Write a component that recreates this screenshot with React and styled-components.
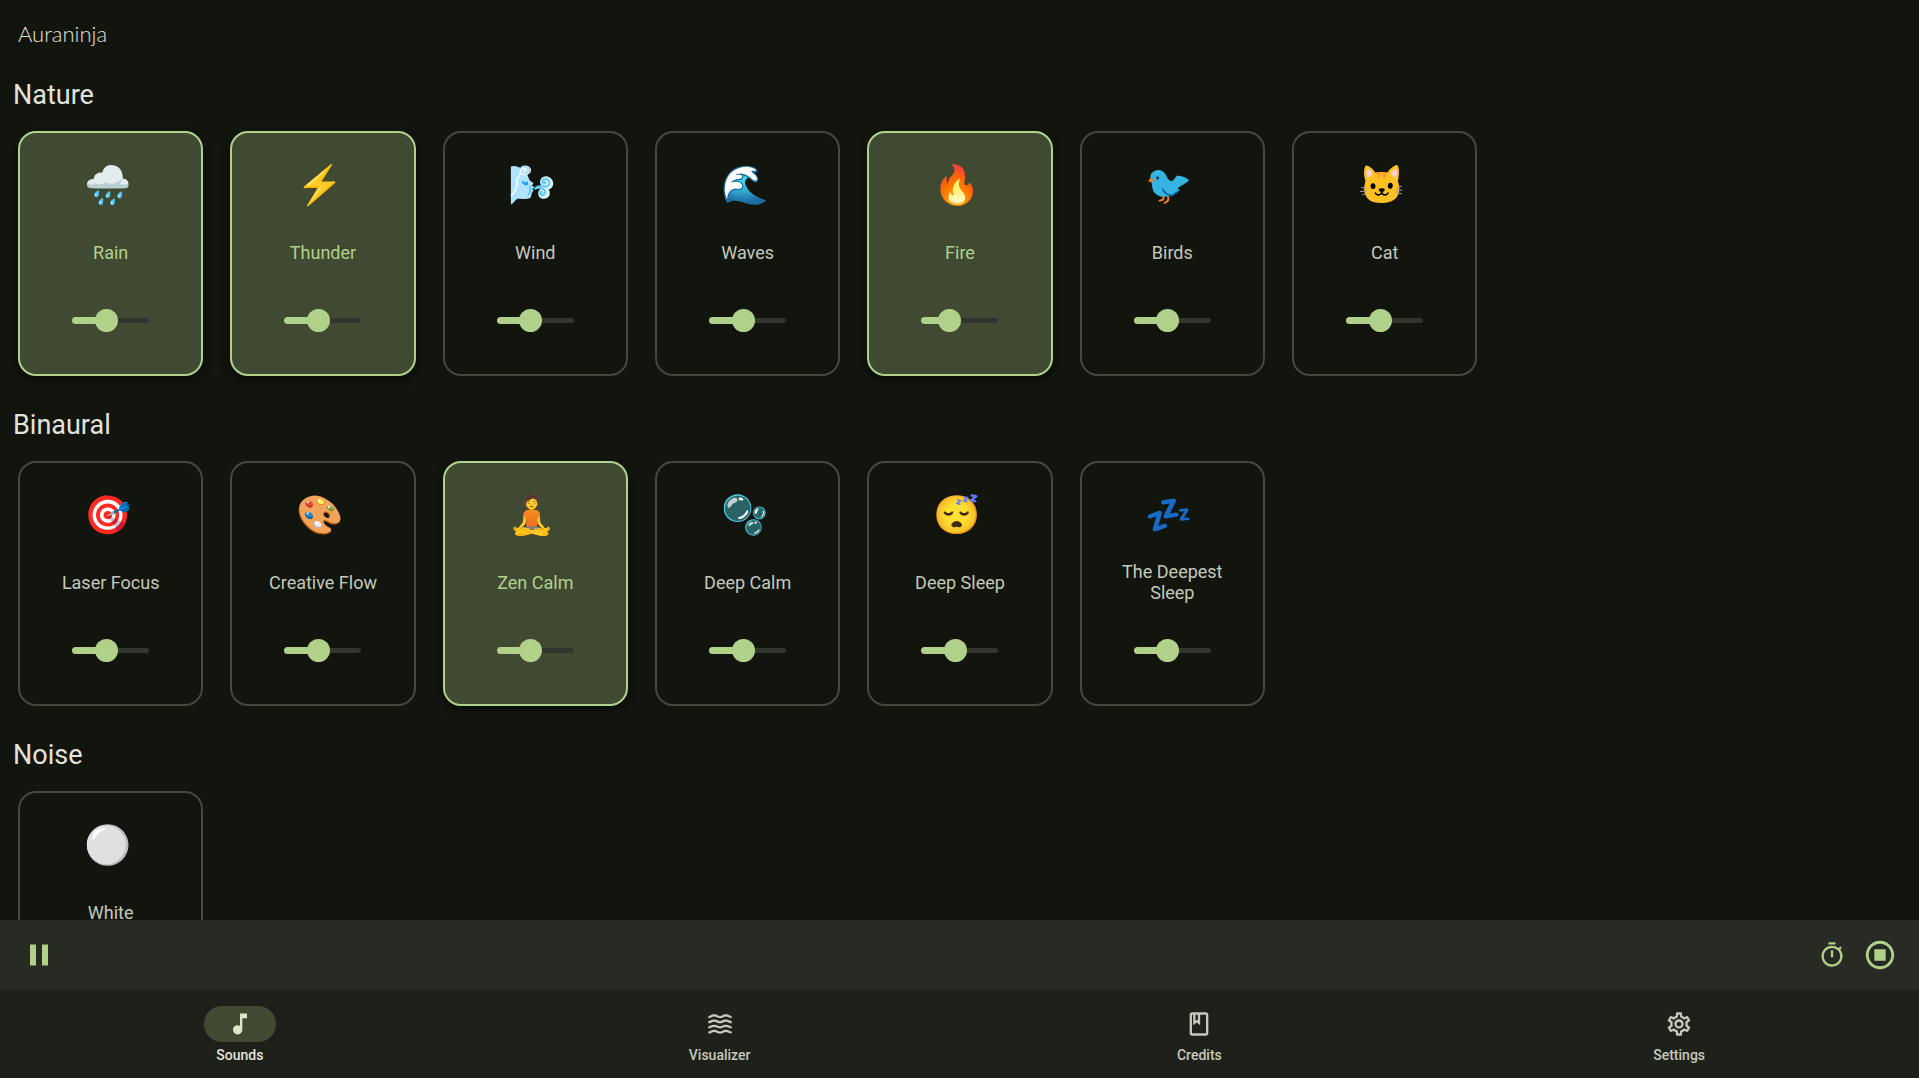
import React, { useState } from 'react';
import styled, { createGlobalStyle } from 'styled-components';
import {
  MdMusicNote,
  MdWaves,
  MdOutlineBook,
  MdOutlineSettings,
  MdOutlineTimer,
  MdOutlineStopCircle,
  MdPause,
} from 'react-icons/md';

const GlobalStyle = createGlobalStyle`
  * {
    box-sizing: border-box;
  }
  body {
    margin: 0;
    background: #12150e;
    color: #e3e3db;
    font-family: Roboto, sans-serif;
  }
  button {
    font-family: inherit;
    border: 0;
    padding: 0;
    background: none;
    cursor: pointer;
  }
`;
const Screen = styled.div`
  height: 100vh;
  display: flex;
  flex-direction: column;
`;
const Header = styled.header`
  flex: none;
  height: 77px;
  padding: 16px 18px;
`;
const Brand = styled.div`
  font-family: Lato, sans-serif;
  font-size: 22px;
  font-weight: 300;
  line-height: 36px;
`;
const Sounds = styled.main`
  flex: 1;
  min-height: 0;
  overflow-y: auto;
  scrollbar-width: none;
`;
const Section = styled.section`
  padding: 0 17px 31px 18px;
`;
const SectionTitle = styled.h2`
  margin: 0 0 18px -5px;
  font-size: 27px;
  font-weight: 400;
  line-height: 36px;
`;
const CardGrid = styled.div`
  display: grid;
  grid-template-columns: repeat(auto-fill, minmax(180px, 1fr));
  gap: 27px;
`;
const Card = styled.article`
  height: 245px;
  padding: 27px 36px;
  display: flex;
  flex-direction: column;
  align-items: center;
  border: 2px solid ${(props) => (props.$active ? '#b1d18a' : '#44483d')};
  border-radius: 18px;
  background: ${(props) => (props.$active ? '#404a33' : 'transparent')};
  color: ${(props) => (props.$active ? '#b1d18a' : '#c5c8ba')};
  box-shadow: ${(props) =>
    props.$active ? '0 4px 8px rgba(0, 0, 0, 0.5)' : 'none'};
`;
const SoundButton = styled.button`
  color: inherit;
  display: flex;
  flex-direction: column;
  align-items: center;
`;
const Emoji = styled.span`
  padding-right: 7px;
  font-size: 38px;
  line-height: 50px;
`;
const Label = styled.span`
  height: 84px;
  display: flex;
  align-items: center;
  font-size: 18px;
  line-height: 21px;
  text-align: center;
`;
const SliderBox = styled.label`
  width: 77px;
  height: 60px;
  display: grid;
  align-items: center;
  > * {
    grid-area: 1 / 1;
  }
`;
const Rail = styled.span`
  height: 5px;
  border-radius: 3px;
  background: #33362e;
`;
const Fill = styled.span`
  height: 7px;
  border-radius: 4px;
  background: #b1d18a;
`;
const Range = styled.input`
  appearance: none;
  width: 100%;
  height: 23px;
  margin: 0;
  background: none;
  cursor: pointer;
  &::-webkit-slider-thumb {
    appearance: none;
    width: 23px;
    height: 23px;
    border-radius: 50%;
    background: #b1d18a;
  }
`;
const PlayerBar = styled.div`
  flex: none;
  height: 70px;
  padding: 0 20px;
  display: flex;
  align-items: center;
  justify-content: space-between;
  background: #282b24;
  color: #b1d18a;
`;
const PlayerActions = styled.div`
  display: flex;
  gap: 10px;
`;
const IconButton = styled.button`
  width: 38px;
  height: 38px;
  display: grid;
  place-items: center;
  color: inherit;
`;
const NavBar = styled.nav`
  flex: none;
  height: 88px;
  display: flex;
  background: #1e211a;
`;
const NavLink = styled.a`
  flex: 1;
  padding-top: 16px;
  display: flex;
  flex-direction: column;
  align-items: center;
  gap: 5px;
  color: ${(props) => (props.$active ? '#e3e3db' : '#c5c8ba')};
  font-size: 14px;
  font-weight: 500;
  line-height: 16px;
  text-decoration: none;
`;
const NavPill = styled.span`
  width: 72px;
  height: 36px;
  display: grid;
  place-items: center;
  border-radius: 18px;
  background: ${(props) => (props.$active ? '#404a33' : 'transparent')};
  color: ${(props) => (props.$active ? '#dce7c8' : 'inherit')};
`;

const sections = [
  {
    title: 'Nature',
    sounds: [
      { name: 'Rain', emoji: '🌧️', volume: 42, active: true },
      { name: 'Thunder', emoji: '⚡', volume: 42, active: true },
      { name: 'Wind', emoji: '🌬️', volume: 42 },
      { name: 'Waves', emoji: '🌊', volume: 42 },
      { name: 'Fire', emoji: '🔥', volume: 30, active: true },
      { name: 'Birds', emoji: '🐦', volume: 42 },
      { name: 'Cat', emoji: '🐱', volume: 42 },
    ],
  },
  {
    title: 'Binaural',
    sounds: [
      { name: 'Laser Focus', emoji: '🎯', volume: 42 },
      { name: 'Creative Flow', emoji: '🎨', volume: 42 },
      { name: 'Zen Calm', emoji: '🧘', volume: 42, active: true },
      { name: 'Deep Calm', emoji: '🫧', volume: 42 },
      { name: 'Deep Sleep', emoji: '😴', volume: 42 },
      { name: 'The Deepest Sleep', emoji: '💤', volume: 42 },
    ],
  },
  {
    title: 'Noise',
    sounds: [{ name: 'White', emoji: '⚪', volume: 42 }],
  },
];

const tabs = [
  { name: 'Sounds', icon: MdMusicNote, active: true },
  { name: 'Visualizer', icon: MdWaves },
  { name: 'Credits', icon: MdOutlineBook },
  { name: 'Settings', icon: MdOutlineSettings },
];

function SoundCard({ sound }) {
  const [active, setActive] = useState(!!sound.active);
  const [volume, setVolume] = useState(sound.volume);
  return (
    <Card $active={active}>
      <SoundButton aria-pressed={active} onClick={() => setActive(!active)}>
        <Emoji>{sound.emoji}</Emoji>
        <Label>{sound.name}</Label>
      </SoundButton>
      <SliderBox>
        <Rail />
        <Fill style={{ width: `${volume}%` }} />
        <Range
          type="range"
          aria-label={`${sound.name} volume`}
          value={volume}
          onChange={(e) => setVolume(Number(e.target.value))}
        />
      </SliderBox>
    </Card>
  );
}

function App() {
  return (
    <Screen>
      <GlobalStyle />
      <Header>
        <Brand>Auraninja</Brand>
      </Header>
      <Sounds>
        {sections.map((section) => (
          <Section key={section.title}>
            <SectionTitle>{section.title}</SectionTitle>
            <CardGrid>
              {section.sounds.map((sound) => (
                <SoundCard key={sound.name} sound={sound} />
              ))}
            </CardGrid>
          </Section>
        ))}
      </Sounds>
      <PlayerBar>
        <IconButton aria-label="Pause">
          <MdPause size={36} />
        </IconButton>
        <PlayerActions>
          <IconButton aria-label="Timer">
            <MdOutlineTimer size={28} />
          </IconButton>
          <IconButton aria-label="Stop">
            <MdOutlineStopCircle size={34} />
          </IconButton>
        </PlayerActions>
      </PlayerBar>
      <NavBar>
        {tabs.map(({ name, icon: TabIcon, active }) => (
          <NavLink key={name} href={`#${name.toLowerCase()}`} $active={active}>
            <NavPill $active={active}>
              <TabIcon size={28} />
            </NavPill>
            {name}
          </NavLink>
        ))}
      </NavBar>
    </Screen>
  );
}

export default App;
